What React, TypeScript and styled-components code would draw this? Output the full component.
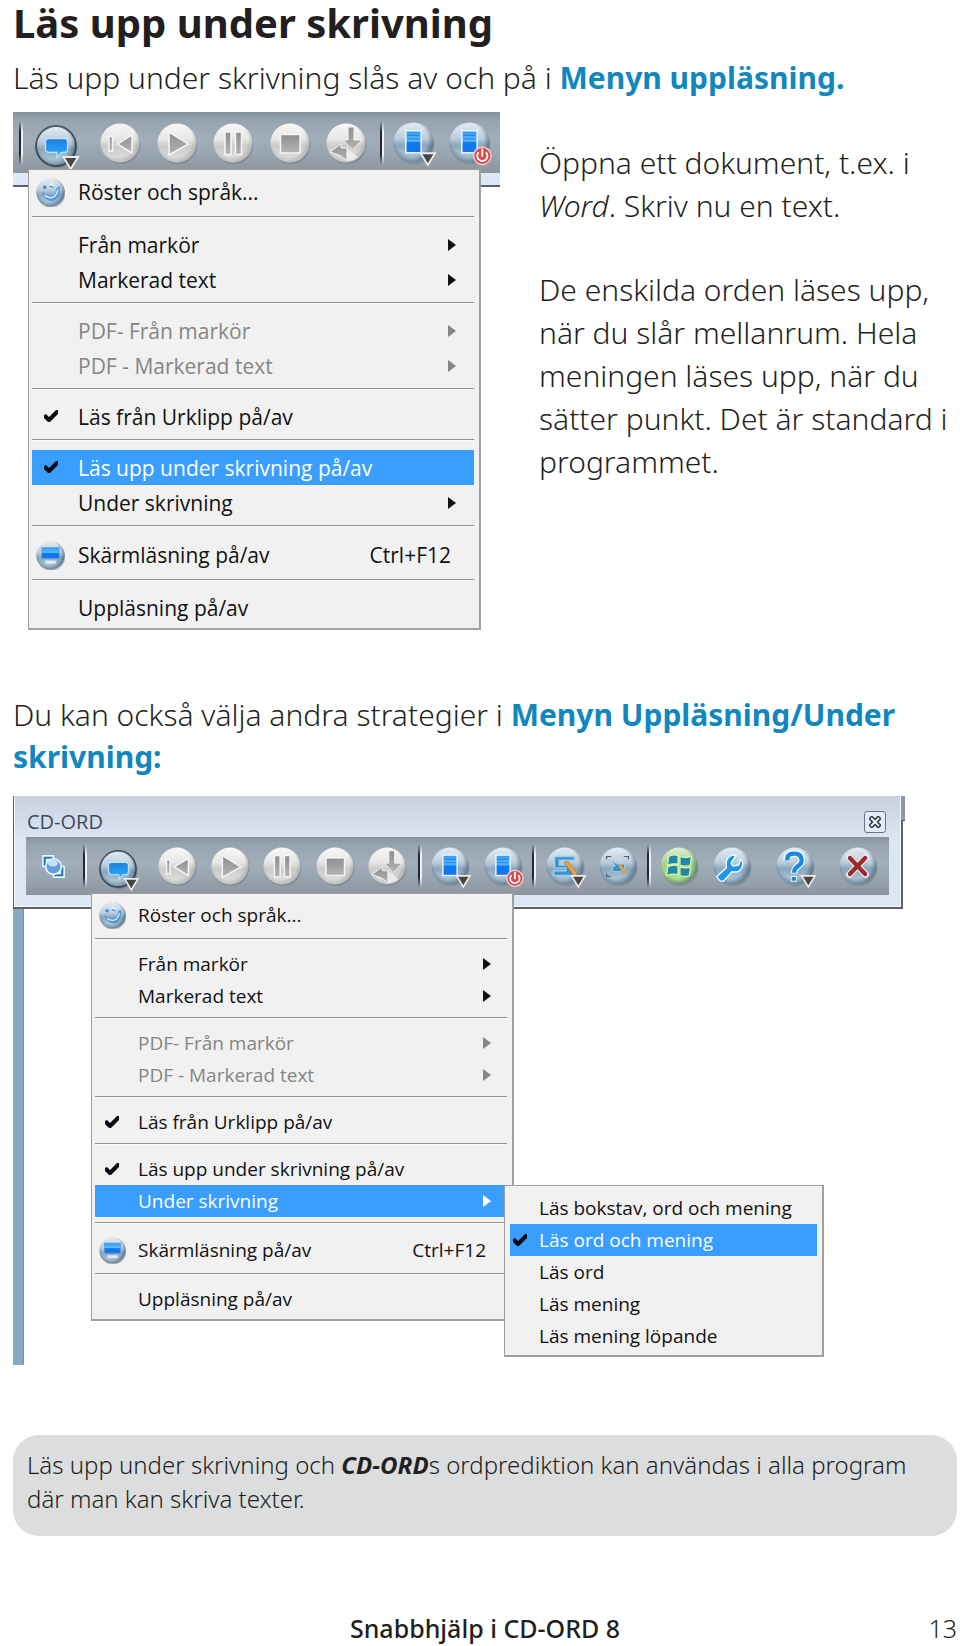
import React from 'react';
import styled, { createGlobalStyle, css } from 'styled-components';

const GlobalStyle = createGlobalStyle`
  *, *::before, *::after { box-sizing: border-box; }
  body { margin: 0; background: #fff; color: #231f20; }
  h1, p, figure { margin: 0; }
  button { border: 0; padding: 0; margin: 0; background: none; color: inherit; font: inherit; text-align: left; }
`;

/* ---------- page ---------- */

const Page = styled.main`
  padding: 1px 3px 2px 13px;
  font-family: 'Noto Sans', 'Open Sans', sans-serif;
  font-size: 30px;
  font-weight: 340;
  line-height: 42px;
`;

const Title = styled.h1`
  font-size: 40px;
  font-weight: 700;
  line-height: 44px;
  margin-bottom: 12px;
`;

const Lead = styled.p`
  margin-bottom: 13px;
`;

const Term = styled.strong`
  font-weight: 700;
  color: #1287bd;
`;

const Split = styled.section`
  display: flex;
  align-items: flex-start;
  gap: 39px;
  margin-bottom: 64px;
`;

const Explanation = styled.div`
  flex: 1;
  display: flex;
  flex-direction: column;
  gap: 41px;
  padding-top: 29px;
  line-height: 43px;
`;

const StrategyText = styled.p`
  margin-bottom: 18px;
`;

const Note = styled.aside`
  margin-top: 70px;
  padding: 13px 30px 20px 14px;
  border-radius: 26px;
  background: #dcddde;
  font-size: 24px;
  font-weight: 300;
  line-height: 34px;
`;

const Brand = styled.strong`
  font-weight: 700;
  font-style: italic;
`;

const Footer = styled.footer`
  display: grid;
  grid-template-columns: 1fr auto 1fr;
  margin-top: 75px;
  font-size: 25px;
  line-height: 34px;
`;

const FooterTitle = styled.span`
  grid-column: 2;
  font-weight: 500;
`;

const PageNumber = styled.span`
  text-align: right;
`;

/* ---------- toolbar ---------- */

const CroppedFigure = styled.figure`
  flex: 0 1 487px;
`;

const Toolbar = styled.div<{ $height: number }>`
  display: flex;
  align-items: center;
  height: ${p => p.$height}px;
  background: linear-gradient(#87929c 0, #96a2ad 12%, #a2aeb9 45%, #98a4af 70%, #8c959e 100%);
`;

const ToolbarEdge = styled.div`
  height: 14px;
  background: #dde7f5;
  border-bottom: 2px solid #5b5f66;
`;

const ToolGroup = styled.div<{ $width: number; $before: number }>`
  flex: none;
  display: flex;
  justify-content: space-between;
  width: ${p => p.$width}px;
  margin-left: ${p => p.$before}px;
`;

const Divider = styled.span<{ $before: number }>`
  flex: none;
  width: 4px;
  height: 44px;
  margin-left: ${p => p.$before}px;
  background: linear-gradient(90deg, #22272b 0 50%, #eef2f6 50%);
  mask-image: linear-gradient(transparent, #000 25% 75%, transparent);
`;

const ToolButton = styled.button<{ $size: number; $pressed?: boolean }>`
  display: block;
  width: ${p => p.$size}px;
  height: ${p => p.$size}px;
  ${p => p.$pressed && css`margin-top: 6px;`}
  svg { display: block; width: 100%; height: 100%; overflow: visible; }
`;

/* ---------- program window ---------- */

const WindowFigure = styled.figure`
  max-width: 890px;
`;

const WindowFrame = styled.div`
  position: relative;
  border: solid #5b6166;
  border-width: 0 2px 2px 1px;
  padding: 1px 12px 12px 12px;
  box-shadow: inset 1px -1px #f6f9fd, inset -1px 0 #f6f9fd;
  background: linear-gradient(#c6d0de, #dde7f4 40%);
  &::after {
    content: '';
    position: absolute;
    left: 100%;
    top: 0;
    width: 4px;
    height: 25px;
    background: #8b97a3;
    border-bottom: 1px solid #50565c;
  }
`;

const TitleBar = styled.div`
  display: flex;
  justify-content: space-between;
  align-items: flex-end;
  height: 40px;
  padding: 0 3px 3px 1px;
`;

const WindowTitle = styled.span`
  font-family: 'Open Sans', sans-serif;
  font-size: 20px;
  font-weight: 400;
  line-height: 24px;
  color: #3f4a58;
`;

const CloseButton = styled.button`
  display: grid;
  place-items: center;
  width: 22px;
  height: 22px;
  margin-bottom: 1px;
  border: 1px solid #66758c;
  border-radius: 3px;
  background: #e3ebf5;
`;

const DocumentArea = styled.div`
  border-left: 10px solid #86a9c6;
  box-shadow: inset 1px 0 #7b8fa3;
  padding: 0 0 44px 68px;
`;

/* ---------- menus ---------- */

type Scale = 'large' | 'small' | 'sub';

const scales = {
  large: { width: 453, font: 21, row: 35, iconRow: 38, mark: 37, end: 18, up: -18, left: 15, pad: '3px 5px 3px 3px', rule: 9 },
  small: { width: 423, font: 19, row: 32, iconRow: 36, mark: 34, end: 16, up: -16, left: 0, pad: '3px 5px 4px 3px', rule: 8 },
  sub: { width: 320, font: 19, row: 32, iconRow: 32, mark: 20, end: 6, up: 0, left: 0, pad: '6px 5px 3px 5px', rule: 8 },
};

const MenuPanel = styled.div<{ $scale: Scale }>`
  position: relative;
  width: ${p => scales[p.$scale].width}px;
  margin: ${p => scales[p.$scale].up}px 0 0 ${p => scales[p.$scale].left}px;
  padding: ${p => scales[p.$scale].pad};
  border: solid #a0a0a0;
  border-width: 1px 2px 2px 1px;
  background: #f1f1f1;
  color: #111;
  font-family: 'Open Sans', sans-serif;
  font-weight: 400;
  font-size: ${p => scales[p.$scale].font}px;
`;

const SubmenuAnchor = styled.div`
  position: relative;
`;

const SubmenuLayer = styled.div`
  position: absolute;
  z-index: 1;
  top: 0;
  left: calc(100% - 3px);
`;

const Rule = styled.hr<{ $after: number }>`
  height: 2px;
  margin: 5px 0 ${p => p.$after}px;
  border: 0;
  background: #909090;
  border-bottom: 1px solid #fafafa;
`;

const Row = styled.button<{ $scale: Scale; $tall?: boolean; $active?: boolean }>`
  display: grid;
  grid-template-columns: ${p => scales[p.$scale].mark}px 1fr auto;
  column-gap: 9px;
  align-items: center;
  width: 100%;
  height: ${p => (p.$tall ? scales[p.$scale].iconRow : scales[p.$scale].row)}px;
  padding-right: ${p => scales[p.$scale].end}px;
  line-height: 30px;
  white-space: nowrap;
  &:disabled { color: #858585; }
  ${p => p.$active && css`background: #3a9eff; color: #fff;`}
`;

const Mark = styled.span`
  display: flex;
  justify-content: center;
  color: #0a0a14;
  svg { display: block; }
`;

const Shortcut = styled.span`
  margin-right: 5px;
`;

/* ---------- drawings ---------- */

const Gradients = styled.svg`
  position: absolute;
  width: 0;
  height: 0;
`;

function Definitions() {
  return (
    <Gradients aria-hidden="true">
      <defs>
        <linearGradient id="gray" x1="0" y1="0" x2="0" y2="1">
          <stop offset="0" stopColor="#f8f8f8" /><stop offset=".4" stopColor="#e6e6e5" />
          <stop offset=".58" stopColor="#cbcbca" /><stop offset="1" stopColor="#e2e2e2" />
        </linearGradient>
        <linearGradient id="blue" x1="0" y1="0" x2="0" y2="1">
          <stop offset="0" stopColor="#e3ecf3" /><stop offset=".4" stopColor="#bccddb" />
          <stop offset=".58" stopColor="#8ba6bc" /><stop offset="1" stopColor="#bfd8e6" />
        </linearGradient>
        <linearGradient id="green" x1="0" y1="0" x2="0" y2="1">
          <stop offset="0" stopColor="#dff0d6" /><stop offset=".5" stopColor="#9ccf86" />
          <stop offset="1" stopColor="#b4ee90" />
        </linearGradient>
        <radialGradient id="rim" cx=".45" cy=".42" r=".56">
          <stop offset=".72" stopColor="#40566a" stopOpacity="0" /><stop offset="1" stopColor="#40566a" stopOpacity=".6" />
        </radialGradient>
        <radialGradient id="softRim" cx=".45" cy=".42" r=".56">
          <stop offset=".78" stopColor="#808080" stopOpacity="0" /><stop offset="1" stopColor="#808080" stopOpacity=".35" />
        </radialGradient>
        <linearGradient id="screen" x1="0" y1="0" x2="0" y2="1">
          <stop offset="0" stopColor="#2f9bf5" /><stop offset=".45" stopColor="#5cb8fb" />
          <stop offset=".55" stopColor="#0a7bf2" /><stop offset="1" stopColor="#1a6fe8" />
        </linearGradient>
        <linearGradient id="bubble" x1="0" y1="0" x2="0" y2="1">
          <stop offset="0" stopColor="#1c7fe0" /><stop offset="1" stopColor="#2bb0ff" />
        </linearGradient>
        <linearGradient id="steel" x1="0" y1="0" x2="0" y2="1">
          <stop offset="0" stopColor="#8f8f8f" /><stop offset="1" stopColor="#b4b4b4" />
        </linearGradient>
      </defs>
    </Gradients>
  );
}

function Sphere({ tone }: { tone: 'gray' | 'blue' | 'green' }) {
  return (
    <>
      <circle cx="21" cy="21.5" r="19.5" fill="#56626d" opacity=".35" />
      <circle cx="20" cy="20" r="19.5" fill={`url(#${tone})`} />
      <circle cx="20" cy="20" r="19.5" fill={tone === 'gray' ? 'url(#softRim)' : 'url(#rim)'} />
    </>
  );
}

const DropArrow = () => <path d="M27 30.5H41L34 42Z" fill="#4a4444" stroke="#ececec" strokeWidth="1.8" />;
const Screen = () => (
  <>
    <rect x="12.5" y="8.5" width="15" height="21.5" fill="url(#screen)" stroke="#e9f5ff" strokeWidth="1.5" />
    <path d="M14 13H26M14 16.5H26" stroke="#1b6fd0" strokeWidth="1.2" opacity=".6" />
  </>
);

type ToolName = 'expand' | 'speech' | 'previous' | 'play' | 'pause' | 'stop' | 'swap' | 'screen' | 'power'
  | 'pencil' | 'select' | 'windows' | 'wrench' | 'help' | 'exit';

const steel = { fill: 'url(#steel)', stroke: '#f6f6f6', strokeWidth: 1.5 };

const glyphs: Record<ToolName, React.ReactNode> = {
  expand: (
    <>
      <path d="M3 3H20V9H9V20H3Z" fill="#1b7fae" stroke="#eaf6ff" strokeWidth="2.5" />
      <path d="M37 37H20V31H31V20H37Z" fill="#1b7fae" stroke="#eaf6ff" strokeWidth="2.5" />
      <circle cx="20" cy="20" r="12.5" fill="#5f9fe0" stroke="#f2faff" strokeWidth="2.5" />
      <ellipse cx="19" cy="14.5" rx="8.5" ry="5.5" fill="#c6e0f8" />
    </>
  ),
  speech: (
    <>
      <Sphere tone="blue" />
      <circle cx="20" cy="20" r="19" fill="none" stroke="#26323f" strokeWidth="1.8" opacity=".75" />
      <path d="M13 13H28Q31 13 31 16V23Q31 26 28 26H25L21 31V26H13Q10 26 10 23V16Q10 13 13 13Z" fill="url(#bubble)" stroke="#c5e4fb" strokeWidth="1.2" />
      <DropArrow />
    </>
  ),
  previous: <><Sphere tone="gray" /><path d="M9 13.5H12.5V28H9ZM32 12V30L17 21Z" {...steel} /></>,
  play: <><Sphere tone="gray" /><path d="M12 9L31.5 21L12 32Z" {...steel} /></>,
  pause: <><Sphere tone="gray" /><path d="M12 9H18V31.5H12ZM22.5 9H28.5V31.5H22.5Z" {...steel} /></>,
  stop: <><Sphere tone="gray" /><rect x="10.5" y="11.5" width="19.5" height="18.5" {...steel} /></>,
  swap: (
    <>
      <Sphere tone="gray" />
      <path d="M22 4H28V17H36L26.5 27L17 17H22Z" {...steel} strokeWidth={1} />
      <path d="M4 29L15 21V25H21V38L15 33Z" {...steel} strokeWidth={1} />
      <path d="M21 25V38Q28 38 32 34Z" fill="#f1f1f1" opacity=".8" />
    </>
  ),
  screen: <><Sphere tone="blue" /><Screen /><DropArrow /></>,
  power: (
    <>
      <Sphere tone="blue" />
      <Screen />
      <circle cx="32.5" cy="33" r="8.5" fill="#d64a4e" stroke="#f6c6c6" strokeWidth="1.5" />
      <path d="M29 29.5a5 5 0 1 0 7 0M32.5 26V34" fill="none" stroke="#fff" strokeWidth="1.8" />
    </>
  ),
  pencil: (
    <>
      <Sphere tone="blue" />
      <path d="M9 10H30V14H14V19H26L30 25V30H8V25H21V22H9Z" fill="#3c8fd0" stroke="#9bd0f3" strokeWidth="1.5" />
      <path d="M19 16L23 15L33 28L30 31Z" fill="#f0a23c" stroke="#b8752a" strokeWidth=".8" />
      <DropArrow />
    </>
  ),
  select: (
    <>
      <Sphere tone="blue" />
      <path d="M8 13V10H13M26 10H31V13M8 28V31H12" fill="none" stroke="#51606e" strokeWidth="1.3" />
      <path d="M13 14L19 18H27V23L22 26H14V21L17 20Z" fill="#3c8fd0" stroke="#a6d6f4" />
      <path d="M20 19L23 18L29 26L26 28Z" fill="#e7a03f" />
    </>
  ),
  windows: (
    <>
      <Sphere tone="green" />
      <path d="M9 10Q14 7 19 9V18Q14 17 8 19ZM21 10Q27 12 33 10L32 19Q27 21 21 19ZM8 21Q14 18 19 20V29Q13 28 7 30ZM21 21Q27 23 32 21L31 30Q26 32 21 30Z" fill="#2189a8" stroke="#e2f6a8" strokeWidth="1.3" />
    </>
  ),
  wrench: (
    <>
      <Sphere tone="blue" />
      <path d="M19 9Q13 12 14 19L14 22L4 31Q7 37 11 36L20 26Q29 28 31 20Q32 15 29 13L27 19L21 20L19 17L24 9Q21 8 19 9Z" fill="#1f95e8" stroke="#edf8ff" strokeWidth="1.5" />
    </>
  ),
  help: (
    <>
      <Sphere tone="blue" />
      <path d="M11 14Q11 7 19 7Q27 7 27 14Q27 18 22 21Q19 23 19 28" fill="none" stroke="#edf8ff" strokeWidth="7" />
      <path d="M12 14Q11 7 19 7Q27 7 27 14Q27 18 22 21Q19 23 19 27" fill="none" stroke="#1688e0" strokeWidth="4.5" />
      <rect x="16" y="31" width="5.5" height="5" fill="#1688e0" stroke="#edf8ff" />
      <DropArrow />
    </>
  ),
  exit: (
    <>
      <Sphere tone="blue" />
      <path d="M11 11L28 29M28 11L11 29" stroke="#f3e9e9" strokeWidth="7" strokeLinecap="round" />
      <path d="M11.5 11.5L27.5 28.5M27.5 11.5L11.5 28.5" stroke="#982b30" strokeWidth="4.5" strokeLinecap="round" />
    </>
  ),
};

function Tool({ name, label, size, pressed }: { name: ToolName; label: string; size: number; pressed?: boolean }) {
  return (
    <ToolButton type="button" aria-label={label} $size={size} $pressed={pressed}>
      <svg viewBox="0 0 40 40" aria-hidden="true">{glyphs[name]}</svg>
    </ToolButton>
  );
}

function MediaTools({ size }: { size: number }) {
  return (
    <>
      <Tool name="previous" label="Föregående" size={size} />
      <Tool name="play" label="Spela" size={size} />
      <Tool name="pause" label="Paus" size={size} />
      <Tool name="stop" label="Stopp" size={size} />
      <Tool name="swap" label="Växla" size={size} />
    </>
  );
}

const Check = () => (
  <svg width="14" height="13" viewBox="0 0 14 13" aria-hidden="true">
    <path d="M0 5L2 4L5 7L12 0H14V4L6 12H4L0 8Z" fill="currentColor" />
  </svg>
);

const Arrow = () => (
  <svg width="8" height="12" viewBox="0 0 8 12" aria-hidden="true">
    <path d="M0 0L8 6L0 12Z" fill="currentColor" />
  </svg>
);

const Face = ({ size }: { size: number }) => (
  <svg width={size} height={size} viewBox="0 0 40 40" aria-hidden="true">
    <Sphere tone="blue" />
    <path d="M8 19Q11 30 21 32Q34 31 33 11Q27 12 27 20Q25 25 19 24Q12 23 8 19Z" fill="#4f9be0" />
    <path d="M12 24Q17 28 22 27Q29 25 30 16" fill="none" stroke="#d8ecfd" strokeWidth="2" />
    <circle cx="12" cy="13" r="2.5" fill="#3f8fd8" /><circle cx="21" cy="10" r="3" fill="#eaf5ff" />
    <path d="M19 11L24 13" stroke="#3f8fd8" strokeWidth="2" />
  </svg>
);

const Monitor = ({ size }: { size: number }) => (
  <svg width={size} height={size} viewBox="0 0 40 40" aria-hidden="true">
    <Sphere tone="blue" />
    <rect x="8" y="9" width="24" height="15" fill="url(#screen)" stroke="#5f9fd8" />
    <path d="M13 27H27L28 31H12Z" fill="#f0f5fa" opacity=".8" />
  </svg>
);

/* ---------- menu contents ---------- */

interface Entry {
  label: string;
  mark?: 'check' | 'face' | 'monitor';
  arrow?: boolean;
  shortcut?: string;
  disabled?: boolean;
  submenu?: Entry[];
}

const reading = (submenu?: Entry[]): Entry[][] => [
  [{ label: 'Röster och språk...', mark: 'face' }],
  [{ label: 'Från markör', arrow: true }, { label: 'Markerad text', arrow: true }],
  [
    { label: 'PDF- Från markör', arrow: true, disabled: true },
    { label: 'PDF - Markerad text', arrow: true, disabled: true },
  ],
  [{ label: 'Läs från Urklipp på/av', mark: 'check' }],
  [{ label: 'Läs upp under skrivning på/av', mark: 'check' }, { label: 'Under skrivning', arrow: true, submenu }],
  [{ label: 'Skärmläsning på/av', mark: 'monitor', shortcut: 'Ctrl+F12' }],
  [{ label: 'Uppläsning på/av' }],
];

const strategies: Entry[] = [
  { label: 'Läs bokstav, ord och mening' },
  { label: 'Läs ord och mening', mark: 'check' },
  { label: 'Läs ord' },
  { label: 'Läs mening' },
  { label: 'Läs mening löpande' },
];

function MenuRow({ entry, scale, active }: { entry: Entry; scale: Scale; active: string }) {
  const iconSize = scale === 'large' ? 29 : 27;
  const checked = entry.mark === 'check';
  const row = (
    <Row
      type="button"
      role={checked ? 'menuitemcheckbox' : 'menuitem'}
      aria-checked={checked || undefined}
      disabled={entry.disabled}
      $scale={scale}
      $tall={entry.mark === 'face' || entry.mark === 'monitor'}
      $active={entry.label === active}
    >
      <Mark>
        {checked && <Check />}
        {entry.mark === 'face' && <Face size={iconSize} />}
        {entry.mark === 'monitor' && <Monitor size={iconSize} />}
      </Mark>
      <span>{entry.label}</span>
      {entry.arrow && <Arrow />}
      {entry.shortcut && <Shortcut>{entry.shortcut}</Shortcut>}
    </Row>
  );
  if (!entry.submenu) return row;
  return (
    <SubmenuAnchor>
      {row}
      <SubmenuLayer>
        <Menu label={entry.label} groups={[entry.submenu]} scale="sub" active="Läs ord och mening" />
      </SubmenuLayer>
    </SubmenuAnchor>
  );
}

function Menu({ label, groups, scale, active }: { label: string; groups: Entry[][]; scale: Scale; active: string }) {
  return (
    <MenuPanel role="menu" aria-label={label} $scale={scale}>
      {groups.map((group, i) => (
        <React.Fragment key={i}>
          {i > 0 && <Rule $after={scales[scale].rule} />}
          {group.map(entry => <MenuRow key={entry.label} entry={entry} scale={scale} active={active} />)}
        </React.Fragment>
      ))}
    </MenuPanel>
  );
}

export default function App() {
  return (
    <Page>
      <GlobalStyle />
      <Definitions />
      <Title>Läs upp under skrivning</Title>
      <Lead>Läs upp under skrivning slås av och på i <Term>Menyn uppläsning.</Term></Lead>

      <Split>
        <CroppedFigure>
          <Toolbar $height={61}>
            <Divider $before={6} />
            <ToolGroup $width={42} $before={12}>
              <Tool name="speech" label="Uppläsning" size={42} pressed />
            </ToolGroup>
            <ToolGroup $width={266} $before={23}><MediaTools size={40} /></ToolGroup>
            <Divider $before={14} />
            <ToolGroup $width={97} $before={9}>
              <Tool name="screen" label="Ordlista" size={41} />
              <Tool name="power" label="Ordlista på/av" size={41} />
            </ToolGroup>
          </Toolbar>
          <ToolbarEdge />
          <Menu label="Uppläsning" groups={reading()} scale="large" active="Läs upp under skrivning på/av" />
        </CroppedFigure>
        <Explanation>
          <p>Öppna ett dokument, t.ex. i <em>Word</em>. Skriv nu en text.</p>
          <p>De enskilda orden läses upp, när du slår mellanrum. Hela meningen läses upp, när du sätter punkt. Det är standard i programmet.</p>
        </Explanation>
      </Split>

      <StrategyText>
        Du kan också välja andra strategier i <Term>Menyn Uppläsning/Under skrivning:</Term>
      </StrategyText>

      <WindowFigure>
        <WindowFrame>
          <TitleBar>
            <WindowTitle>CD-ORD</WindowTitle>
            <CloseButton type="button" aria-label="Stäng">
              <svg width="12" height="12" viewBox="0 0 12 12" aria-hidden="true">
                <path d="M1 1L11 11M11 1L1 11" stroke="#2c3644" strokeWidth="5" />
                <path d="M2 2L10 10M10 2L2 10" stroke="#f4f7fb" strokeWidth="2" />
              </svg>
            </CloseButton>
          </TitleBar>
          <Toolbar $height={58}>
            <ToolGroup $width={25} $before={15}><Tool name="expand" label="Minimera" size={25} /></ToolGroup>
            <Divider $before={17} />
            <ToolGroup $width={38} $before={12}>
              <Tool name="speech" label="Uppläsning" size={38} pressed />
            </ToolGroup>
            <ToolGroup $width={248} $before={21}><MediaTools size={38} /></ToolGroup>
            <Divider $before={12} />
            <ToolGroup $width={91} $before={9}>
              <Tool name="screen" label="Ordlista" size={38} />
              <Tool name="power" label="Ordlista på/av" size={38} />
            </ToolGroup>
            <Divider $before={10} />
            <ToolGroup $width={91} $before={10}>
              <Tool name="pencil" label="Skanning" size={38} />
              <Tool name="select" label="Markera område" size={38} />
            </ToolGroup>
            <Divider $before={10} />
            <ToolGroup $width={91} $before={9}>
              <Tool name="windows" label="Program" size={38} />
              <Tool name="wrench" label="Inställningar" size={38} />
            </ToolGroup>
            <ToolGroup $width={38} $before={25}><Tool name="help" label="Hjälp" size={38} /></ToolGroup>
            <ToolGroup $width={38} $before={25}><Tool name="exit" label="Avsluta" size={38} /></ToolGroup>
          </Toolbar>
        </WindowFrame>
        <DocumentArea>
          <Menu label="Uppläsning" groups={reading(strategies)} scale="small" active="Under skrivning" />
        </DocumentArea>
      </WindowFigure>

      <Note>
        <p>Läs upp under skrivning och <Brand>CD-ORD</Brand>s ordprediktion kan användas i alla program där man kan skriva texter.</p>
      </Note>

      <Footer>
        <FooterTitle>Snabbhjälp i CD-ORD 8</FooterTitle>
        <PageNumber>13</PageNumber>
      </Footer>
    </Page>
  );
}
